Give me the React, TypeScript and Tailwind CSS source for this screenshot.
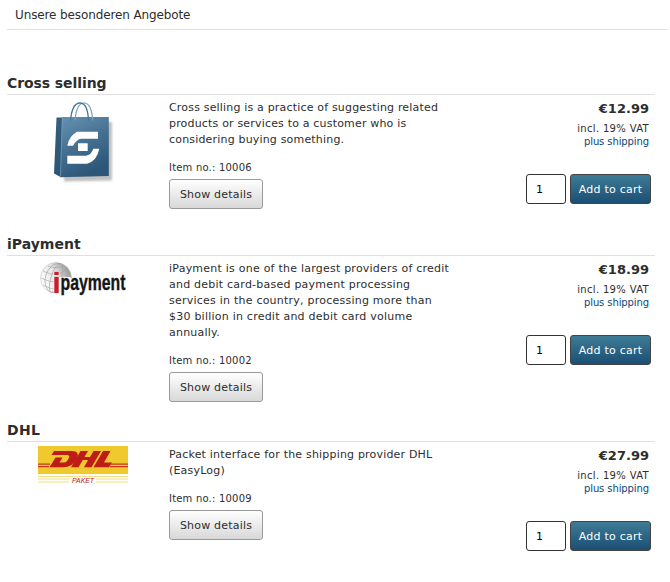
import React from "react";

function BagLogo() {
  return (
    <svg width="66" height="86" viewBox="0 0 66 86" role="img" aria-label="Shopping bag">
      <defs>
        <linearGradient id="bag" x1="0" y1="0" x2="0.4" y2="1">
          <stop offset="0" stopColor="#6593b3" />
          <stop offset="0.55" stopColor="#456f90" />
          <stop offset="1" stopColor="#2d5778" />
        </linearGradient>
        <linearGradient id="bagSide" x1="0" y1="0" x2="0" y2="1">
          <stop offset="0" stopColor="#355d7d" />
          <stop offset="1" stopColor="#2b5576" />
        </linearGradient>
        <filter id="soft" x="-20%" y="-20%" width="140%" height="140%">
          <feGaussianBlur stdDeviation="1.2" />
        </filter>
      </defs>
      <path d="M12 21H58V79.5L10 80.5Z" fill="#c0c0c0" filter="url(#soft)" />
      <path d="M2.5 16.5H9L6.5 76L0 72.5Z" fill="url(#bagSide)" />
      <path d="M8 16H54.8V75L6 76.3Z" fill="url(#bag)" />
      <path d="M8.3 17L6.5 75.5" stroke="#7fa3bd" strokeWidth="0.6" />
      <path d="M21 19.5C22 8 25 2 30 2C35 2 38 8 38.7 19.5" fill="none" stroke="#78a0b8" strokeWidth="1.2" />
      <path d="M16.5 19.5C17.5 8 21 2 26 2C31 2 34 8 34.5 19.5" fill="none" stroke="#497898" strokeWidth="1.3" />
      <path d="M44 30.7V37.7H27Q23 38 19 44.7H13.3Q15 35 23 30.7ZM24 42.3H33.7V50H24ZM13.3 62.7V54.7H32Q37 54 39.3 47.7H45.3Q43 60 33 62.7Z" fill="#fff" />
    </svg>
  );
}

function IPaymentLogo() {
  return (
    <svg width="92" height="42" viewBox="0 0 92 42" overflow="visible" role="img" aria-label="iPayment">
      <defs>
        <linearGradient id="globe" x1="0" y1="0.7" x2="1" y2="0.2">
          <stop offset="0" stopColor="#fff" />
          <stop offset="0.5" stopColor="#e6e6e6" />
          <stop offset="1" stopColor="#8c8c8c" />
        </linearGradient>
      </defs>
      <circle cx="17" cy="18" r="15.5" fill="url(#globe)" />
      <g fill="none" stroke="#a2a2a2" strokeWidth="0.6">
        <circle cx="17" cy="18" r="15.5" stroke="#c4c4c4" />
        <ellipse cx="17" cy="18" rx="5" ry="15" transform="rotate(18 17 18)" />
        <ellipse cx="17" cy="18" rx="10.5" ry="15" transform="rotate(18 17 18)" />
        <path d="M2 18Q17 26 32 18M4 11Q18 19 29 8M4 25Q18 33 29 27M9 6Q18 10 25 5" />
      </g>
      <path d="M20 17H31L34 20V34H20Z" fill="#fff" />
      <path d="M15.3 16.7H19.7V33H15.3ZM15.3 11.7H19.7V15H15.3Z" fill="#c8202b" stroke="#fff" strokeWidth="1" paintOrder="stroke" />
      <text x="21.5" y="29.5" textLength="65" lengthAdjust="spacingAndGlyphs" fontFamily="Liberation Sans, sans-serif" fontWeight="700" fontSize="21.5" fill="#151515" stroke="#151515" strokeWidth="0.35">payment</text>
    </svg>
  );
}

function DhlLogo() {
  return (
    <svg width="90" height="38" viewBox="0 0 90 38" role="img" aria-label="DHL Paket">
      <path d="M0 0H90V28H0Z" fill="#f0c92f" />
      <path d="M0 28H90V38H0Z" fill="#fffdf4" />
      <path d="M0 30.5H90M0 33H31M58 33H90M0 36H31M58 36H90" stroke="#f1dc80" strokeWidth="0.9" />
      <path d="M0 18.2H12M0 20.6H11M73 18.2H90M72 20.6H90" stroke="#c93a1c" strokeWidth="1.2" />
      <g fill="#c01c17">
        <path d="M16 5H34Q42 5 39 12Q35 21.3 25 21.3H11.5L17.5 11.5H24.5L21.5 16.5H26Q29 16.5 31 11.5Q32 9 29 9H13.5Z" />
        <path d="M42.5 5H50L46.5 11H52L55.5 5H63L53.5 21.3H46L50 14H44.8L40.5 21.3H33Z" />
        <path d="M65 5H72.5L66 16.5H74L71 21.3H55.5Z" />
      </g>
      <text x="34" y="36.7" textLength="22" lengthAdjust="spacingAndGlyphs" fontFamily="Liberation Sans, sans-serif" fontStyle="italic" fontSize="8" fill="#b8201c">PAKET</text>
    </svg>
  );
}

type ProductProps = {
  title: string;
  titleClass: string;
  textClass: string;
  lines: string[];
  item: string;
  price: string;
  height: string;
  logoClass: string;
  logo: React.ReactNode;
};

function Product({ title, titleClass, textClass, lines, item, price, height, logoClass, logo }: ProductProps) {
  return (
    <section className={`flex w-[648px] flex-col ${height}`}>
      <h2 className={`h-6 shrink-0 border-b border-[#dfdfdf] text-[14px] leading-[24px] font-bold ${titleClass}`}>{title}</h2>
      <div className="flex">
        <div className={`w-[162px] shrink-0 ${logoClass}`}>{logo}</div>
        <div className="w-[320px] shrink-0 pt-[5px] text-[11px]">
          <p className={`leading-4 whitespace-nowrap ${textClass}`}>
            {lines.map((l) => (
              <span key={l} className="block">{l}</span>
            ))}
          </p>
          <p className="mt-3 text-[10px] leading-4 tracking-[0.2px]">Item no.: {item}</p>
          <button className="mt-[3px] h-[30px] w-[94px] rounded-[3px] border border-[#999] bg-linear-to-b from-white to-[#d8d8d8] pt-0.5 text-[11px] tracking-[0.2px] whitespace-nowrap">
            Show details
          </button>
        </div>
        <div className="flex grow flex-col pr-1.5 text-right">
          <p className="pt-1 text-[13px] leading-[20px] font-bold">{price}</p>
          <p className="mt-[3px] text-[10px] leading-[13px] tracking-[0.33px]">incl. 19% VAT</p>
          <p className="text-[10px] leading-[13px] tracking-[-0.1px] text-[#0b4775]">plus shipping</p>
          <div className="mt-[26px] -mr-0.5 flex justify-end gap-1">
            <input
              defaultValue="1"
              aria-label="Quantity"
              className="h-[30px] w-10 rounded-[3px] border border-[#333] bg-white pl-[9px] text-[11px] text-black"
            />
            <button className="h-[30px] w-[81px] rounded-[3px] border border-[#444] bg-linear-to-b from-[#3e7c96] to-[#1b4f74] pt-0.5 text-[11px] tracking-[0.25px] whitespace-nowrap text-white">
              Add to cart
            </button>
          </div>
        </div>
      </div>
    </section>
  );
}

export default function App() {
  return (
    <main className="h-[582px] w-[670px] overflow-hidden bg-white pl-[7px] font-['DejaVu_Sans',Verdana,sans-serif] text-[#2d2d2d]">
      <header className="h-[30px] w-[660px] border-b border-[#dfdfdf] pl-2 text-[12px] leading-[30px] tracking-[-0.12px]">
        Unsere besonderen Angebote
      </header>
      <div className="pt-[41px]">
        <Product
          title="Cross selling"
          titleClass="tracking-[-0.08px]"
          textClass="tracking-[0.18px]"
          height="h-[161px]"
          lines={["Cross selling is a practice of suggesting related", "products or services to a customer who is", "considering buying something."]}
          item="10006"
          price="€12.99"
          logoClass="pt-[6px] pl-[47px]"
          logo={<BagLogo />}
        />
        <Product
          title="iPayment"
          titleClass=""
          textClass="tracking-[0.23px]"
          height="h-[186px]"
          lines={["iPayment is one of the largest providers of credit", "and debit card-based payment processing", "services in the country, processing more than", "$30 billion in credit and debit card volume", "annually."]}
          item="10002"
          price="€18.99"
          logoClass="pt-[4px] pl-[32px]"
          logo={<IPaymentLogo />}
        />
        <Product
          title="DHL"
          titleClass="tracking-[0.3px]"
          textClass="tracking-[0.19px]"
          height="h-[160px]"
          lines={["Packet interface for the shipping provider DHL", "(EasyLog)"]}
          item="10009"
          price="€27.99"
          logoClass="pt-[4px] pl-[31px]"
          logo={<DhlLogo />}
        />
      </div>
    </main>
  );
}
